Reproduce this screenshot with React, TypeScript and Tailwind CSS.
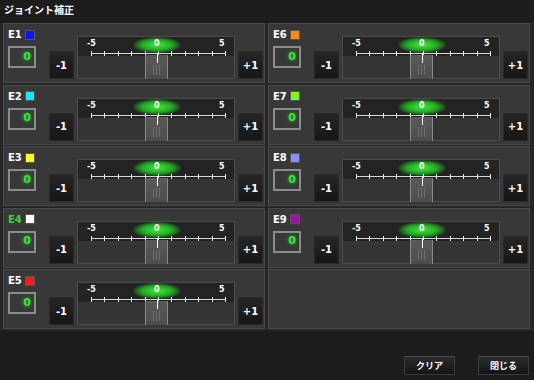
import React from 'react';

type Joint = { id: string; color: string; active?: boolean };

const left: Joint[] = [
  { id: 'E1', color: '#0a14ff' },
  { id: 'E2', color: '#19e6f5' },
  { id: 'E3', color: '#ffff1a' },
  { id: 'E4', color: '#ffffff', active: true },
  { id: 'E5', color: '#ff1a1a' },
];

const right: Joint[] = [
  { id: 'E6', color: '#ff8a1a' },
  { id: 'E7', color: '#7cff1a' },
  { id: 'E8', color: '#8c8cff' },
  { id: 'E9', color: '#a010a8' },
];

const font = { fontFamily: '"DejaVu Sans", "Liberation Sans", sans-serif' };

function StepButton({ label }: { label: string }) {
  return (
    <div className="flex h-[28px] w-[25px] shrink-0 items-center justify-center border border-[#2a2a2a] bg-gradient-to-b from-[#262626] to-[#161616] text-[10px] font-bold text-white">
      {label}
    </div>
  );
}

function Scale() {
  const ticks = Array.from({ length: 11 }, (_, i) => 13 + i * 13.4);
  return (
    <div className="relative h-[43px] w-[158px] shrink-0 border border-[#4c4c4c] bg-[#343434]">
      {/* header band */}
      <div className="absolute inset-x-0 top-0 h-[19px] bg-[#232323]" />
      <div className="absolute left-[55px] top-[0px] h-[16px] w-[48px] rounded-[50%] bg-[radial-gradient(ellipse_at_center,#44e844_0%,#22a822_45%,rgba(35,35,35,0)_75%)]" />
      <span className="absolute left-[9px] top-[1px] text-[8px] font-bold text-white">-5</span>
      <span className="absolute left-[76px] top-[1px] text-[8px] font-bold text-white">0</span>
      <span className="absolute left-[141px] top-[1px] text-[8px] font-bold text-white">5</span>
      <svg className="absolute left-0 top-[12px]" width="158" height="10">
        <line x1="13" y1="4.5" x2="147" y2="4.5" stroke="#d8d8d8" strokeWidth="1" />
        {ticks.map((x, i) => (
          <line key={i} x1={Math.round(x) + 0.5} y1="2" x2={Math.round(x) + 0.5} y2="7" stroke="#e8e8e8" strokeWidth="1" />
        ))}
      </svg>
      {/* thumb */}
      <div className="absolute left-[67px] top-[18px] flex h-[24px] w-[23px] justify-center gap-[2px] border-x border-[#8a8a8a] bg-gradient-to-b from-[#5a5a5a] to-[#4c4c4c] pt-[10px]">
        <div className="h-[10px] w-px bg-[#6e6e6e]" />
        <div className="h-[10px] w-px bg-[#6e6e6e]" />
        <div className="h-[10px] w-px bg-[#6e6e6e]" />
      </div>
      <div className="absolute left-[79px] top-[16px] h-[10px] w-px bg-white" />
    </div>
  );
}

function JointPanel({ j }: { j: Joint }) {
  return (
    <div className="flex h-[60px] items-end gap-[3px] border border-[#4a4a4a] bg-[#383838] pb-[3px] pr-[2px]" style={font}>
      <div className="flex h-full w-[42px] shrink-0 flex-col pl-[4px] pt-[3px]">
        <div className="flex items-center gap-[3px]">
          <span className={`text-[10px] font-bold ${j.active ? 'text-[#3ed23e]' : 'text-white'}`}>{j.id}</span>
          <span className="h-[10px] w-[10px] border border-[#555]" style={{ background: j.color }} />
        </div>
        <div className="mt-[4px] flex h-[22px] w-[28px] items-center justify-end border-2 border-[#8c8c8c] bg-[#383838] pr-[3px] text-[11px] font-bold text-[#3fe03f] [text-shadow:0_0_4px_#1ec81e]">
          0
        </div>
      </div>
      <StepButton label="-1" />
      <Scale />
      <StepButton label="+1" />
    </div>
  );
}

function FooterButton({ label }: { label: string }) {
  return (
    <div className="flex h-[19px] w-[51px] items-center justify-center border border-[#3a3a3a] border-t-[#4a4a4a] bg-gradient-to-b from-[#2c2c2c] to-[#141414] text-[9px] font-bold text-white" style={{ fontFamily: '"Noto Sans CJK JP", sans-serif' }}>
      {label}
    </div>
  );
}

export default function App() {
  return (
    <div className="flex h-[380px] w-[534px] flex-col bg-[#1c1c1c]">
      <div className="h-[23px] px-[4px] pt-[2px] text-[10px] font-bold text-white" style={{ fontFamily: '"Noto Sans CJK JP", sans-serif' }}>
        ジョイント補正
      </div>
      <div className="grid grid-cols-2 gap-x-[3px] gap-y-[1.5px] bg-[#262626] pb-[2px] pl-[3px] pr-[4px]">
        <div className="flex flex-col gap-[1.5px]">
          {left.map(j => <JointPanel key={j.id} j={j} />)}
        </div>
        <div className="flex flex-col gap-[1.5px]">
          {right.map(j => <JointPanel key={j.id} j={j} />)}
          <div className="h-[60px] border border-[#4a4a4a] bg-[#383838]" />
        </div>
      </div>
      <div className="flex flex-1 items-end justify-end gap-[23px] pb-[5px] pr-[5px]">
        <FooterButton label="クリア" />
        <FooterButton label="閉じる" />
      </div>
    </div>
  );
}
